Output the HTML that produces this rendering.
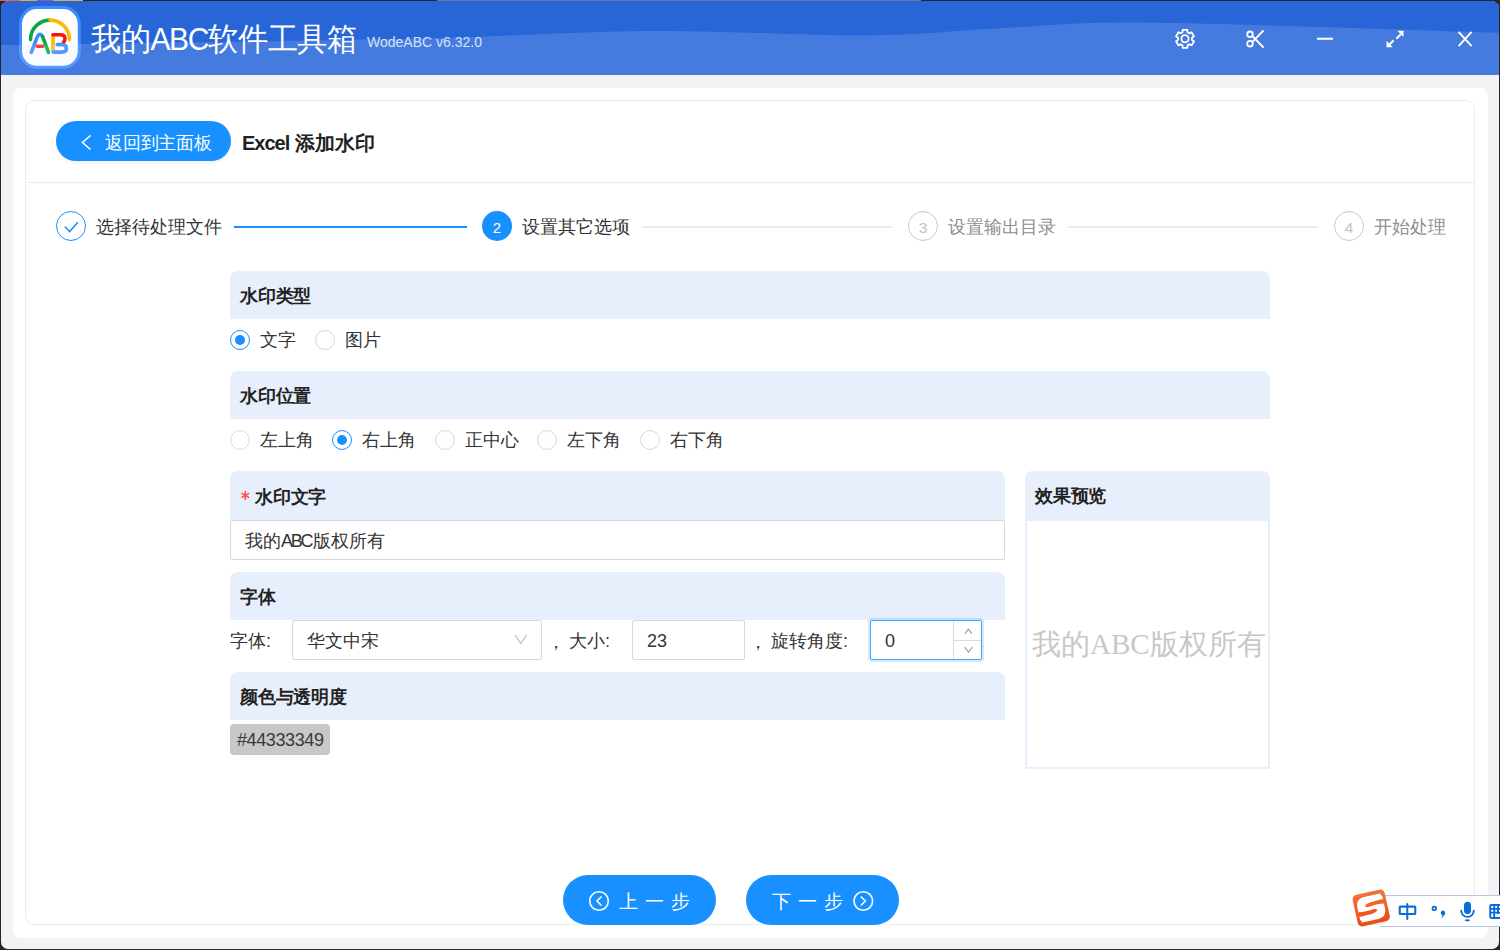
<!DOCTYPE html>
<html><head><meta charset="utf-8">
<style>
*{box-sizing:border-box;margin:0;padding:0}
html,body{width:1500px;height:950px;overflow:hidden;background:#242432;font-family:"Liberation Sans",sans-serif;color:#333}
.abs{position:absolute}
#win{position:absolute;left:1px;top:1px;width:1498px;height:948px;background:#f3f3f3;border-radius:8px 8px 7px 7px;overflow:hidden}
#hdr{position:absolute;left:0;top:0;width:1498px;height:74px;background:#467ddb}
#hdr svg{position:absolute;left:0;top:0}
.t{position:absolute;white-space:nowrap;line-height:1}
#card{position:absolute;left:12px;top:87px;width:1475px;height:850px;background:#fff;border-radius:8px}
#inner{position:absolute;left:24px;top:99px;width:1450px;height:825px;border:1px solid #ececec;border-radius:9px;background:#fff}
.sec{position:absolute;background:#e8effc;border-radius:8px 8px 0 0;height:48px}
.sech{position:absolute;font-size:18px;font-weight:bold;color:#222;white-space:nowrap;line-height:1;margin-top:1px;letter-spacing:-0.2px}
.radio{position:absolute;width:20px;height:20px;border:1px solid #d9d9d9;border-radius:50%;background:#fff}
.radio.on{border-color:#1890ff}
.radio.on:after{content:"";position:absolute;left:4px;top:4px;width:10px;height:10px;border-radius:50%;background:#1890ff}
.lbl{position:absolute;font-size:18px;color:#333;white-space:nowrap;line-height:1}
.inp{position:absolute;border:1px solid #d9d9d9;border-radius:2px;background:#fff}
.btn{position:absolute;background:#1890ff;border-radius:25px;color:#fff}
</style></head><body>
<div class="abs" style="left:437px;top:0;width:484px;height:1px;background:#5b78a6"></div><div class="abs" style="left:0;top:0;width:20px;height:1px;background:#e8643a"></div><div class="abs" style="left:20px;top:0;width:17px;height:1px;background:#e0b040"></div><div class="abs" style="left:37px;top:0;width:16px;height:1px;background:#8a5cb8"></div><div class="abs" style="left:53px;top:0;width:30px;height:1px;background:#d8b048"></div>
<div id="win">
  <div id="hdr">
    <svg width="1498" height="74" viewBox="1 1 1498 74" style="position:absolute;left:0;top:0">
      <rect x="0" y="0" width="1500" height="80" fill="#2866d8"/>
      <rect x="19" y="6" width="61.8" height="62.8" rx="18" fill="#3d8cfc"/>
      <rect x="22" y="9" width="55.8" height="56.8" rx="15" fill="#fff"/>
      <g fill="none" stroke-linecap="round" stroke-width="3.6">
        <path d="M30.5,39.6 A19.5,19.5 0 0 1 50,20.1" stroke="#0aa640"/>
        <path d="M50,20.1 A19.5,19.5 0 0 1 69.5,39.6" stroke="#ffb800"/>
        <path d="M31.3,52.3 L37.2,37 Q40,31.8 42.8,37" stroke="#3d8cfc"/>
        <path d="M42.6,36.6 L48.5,52.3" stroke="#0aa640"/>
        <path d="M37.2,46.3 L42.6,46.3" stroke="#ff2020"/>
        <path d="M53,36 L53,51" stroke="#ffb800"/>
        <path d="M53,34.8 L60.5,34.8 Q65,34.8 65,38.6 Q65,41.2 63.5,42" stroke="#ff1010"/>
        <path d="M57.2,44.6 L62,44.6 Q66.4,44.6 66.4,48.3 Q66.4,52.1 62,52.1 L53.2,52.1" stroke="#3d8cfc"/>
      </g>
      <path fill="rgba(214,232,255,0.17)" d="M0,80 L1500,80 L1500,32.7 C1425.0,30.7 1233.3,23.4 1150.0,22.7 C1066.7,22.0 1047.2,26.2 1000.0,28.3 C952.8,30.4 925.3,35.0 867.0,35.5 C808.7,36.0 727.8,30.4 650.0,31.0 C572.2,31.6 508.3,36.7 400.0,39.0 C291.7,41.3 83.3,43.7 0,45 Z"/>
      <g fill="none" stroke="#fff" stroke-width="1.8" stroke-linecap="round" stroke-linejoin="round">
        <path id="gear" d="M1181.50,32.74 L1182.53,32.25 L1182.61,29.81 L1187.39,29.81 L1187.47,32.25 L1188.50,32.74 L1189.44,33.39 L1191.59,32.24 L1193.98,36.38 L1191.91,37.66 L1192.00,38.80 L1191.91,39.94 L1193.98,41.22 L1191.59,45.36 L1189.44,44.21 L1188.50,44.86 L1187.47,45.35 L1187.39,47.79 L1182.61,47.79 L1182.53,45.35 L1181.50,44.86 L1180.56,44.21 L1178.41,45.36 L1176.02,41.22 L1178.09,39.94 L1178.00,38.80 L1178.09,37.66 L1176.02,36.38 L1178.41,32.24 L1180.56,33.39 Z"/>
        <circle cx="1185" cy="38.8" r="3.6"/>
        <circle cx="1250" cy="34.3" r="2.8"/>
        <circle cx="1250" cy="43.7" r="2.8"/>
        <path d="M1252.4,36.2 L1263,47 M1252.4,41.8 L1263,31"/>
        <path d="M1317,38.8 L1333,38.8" stroke-width="2" stroke-linecap="butt"/>
        <path d="M1396.3,38.7 L1400.6,34.4 M1393.7,40.3 L1389.4,44.6" stroke-width="2.1" stroke-linecap="butt"/><path d="M1397.3,30.8 L1403.5,30.8 L1403.5,37 Z M1386.5,40.8 L1386.5,47.2 L1392.7,47.2 Z" fill="#fff" stroke="none"/>
        <path d="M1458.6,31.8 L1471.6,46.2 M1471.6,31.8 L1458.6,46.2" stroke-width="1.9" stroke-linecap="butt"/>
      </g>
    </svg>
    <div class="t" style="left:90px;top:23px;font-size:30px;color:#fff;letter-spacing:-0.3px;transform:scaleY(1.06);transform-origin:0 0">我的<span style="letter-spacing:-1.3px">ABC</span>软件工具箱</div>
    <div class="t" style="left:366px;top:34px;font-size:14px;color:#d5e2f8">WodeABC v6.32.0</div>
  </div>
  <div id="card"></div>
  <div id="inner"></div>
</div>

<div id="pg" style="position:absolute;left:0;top:0;width:1500px;height:950px">
  <!-- back button -->
  <div class="btn" style="left:56px;top:121px;width:175px;height:40px;border-radius:20px;box-shadow:0 2px 3px rgba(0,0,0,0.06)"></div>
  <svg class="abs" style="left:0;top:0" width="1500" height="950">
    <path d="M90.5,135.5 L82.5,142.5 L90.5,149.5" fill="none" stroke="#fff" stroke-width="1.6"/>
  </svg>
  <div class="t" style="left:105px;top:134px;font-size:18px;color:#fff;letter-spacing:-0.2px">返回到主面板</div>
  <div class="t" style="left:242px;top:133px;font-size:20px;font-weight:bold;color:#222"><span style="letter-spacing:-1px">Excel</span> 添加水印</div>
  <div class="abs" style="left:25px;top:182px;width:1449px;height:1px;background:#ececec"></div>

  <!-- steps -->
  <div class="abs" style="left:56px;top:211px;width:30px;height:30px;border:1px solid #1890ff;border-radius:50%"></div>
  <svg class="abs" style="left:0;top:0" width="1500" height="950">
    <path d="M64.8,226.6 L69.6,231.6 L77.9,222.2" fill="none" stroke="#1890ff" stroke-width="1.5"/>
  </svg>
  <div class="t" style="left:96px;top:218px;font-size:18px;color:#333">选择待处理文件</div>
  <div class="abs" style="left:234px;top:226px;width:233px;height:2px;background:#1890ff"></div>

  <div class="abs" style="left:482px;top:211px;width:30px;height:30px;background:#1890ff;border-radius:50%"></div>
  <div class="t" style="left:482px;top:220px;width:30px;text-align:center;font-size:15px;color:#fff">2</div>
  <div class="t" style="left:522px;top:218px;font-size:18px;color:#333">设置其它选项</div>
  <div class="abs" style="left:642px;top:226px;width:250px;height:2px;background:#ececec"></div>

  <div class="abs" style="left:908px;top:211px;width:30px;height:30px;border:1px solid #c8c8c8;border-radius:50%"></div>
  <div class="t" style="left:908px;top:220px;width:30px;text-align:center;font-size:15.5px;color:#c2c2c2">3</div>
  <div class="t" style="left:948px;top:218px;font-size:18px;color:#8e8e8e">设置输出目录</div>
  <div class="abs" style="left:1068px;top:226px;width:250px;height:2px;background:#ececec"></div>

  <div class="abs" style="left:1334px;top:211px;width:30px;height:30px;border:1px solid #c8c8c8;border-radius:50%"></div>
  <div class="t" style="left:1334px;top:220px;width:30px;text-align:center;font-size:15.5px;color:#c2c2c2">4</div>
  <div class="t" style="left:1374px;top:218px;font-size:18px;color:#8e8e8e">开始处理</div>

  <!-- section 1 -->
  <div class="sec" style="left:230px;top:271px;width:1040px"></div>
  <div class="sech" style="left:240px;top:286px">水印类型</div>
  <div class="radio on" style="left:230px;top:330px"></div>
  <div class="lbl" style="left:260px;top:331px">文字</div>
  <div class="radio" style="left:315px;top:330px"></div>
  <div class="lbl" style="left:345px;top:331px">图片</div>

  <!-- section 2 -->
  <div class="sec" style="left:230px;top:371px;width:1040px"></div>
  <div class="sech" style="left:240px;top:386px">水印位置</div>
  <div class="radio" style="left:230px;top:430px"></div>
  <div class="lbl" style="left:260px;top:431px">左上角</div>
  <div class="radio on" style="left:332px;top:430px"></div>
  <div class="lbl" style="left:362px;top:431px">右上角</div>
  <div class="radio" style="left:435px;top:430px"></div>
  <div class="lbl" style="left:465px;top:431px">正中心</div>
  <div class="radio" style="left:537px;top:430px"></div>
  <div class="lbl" style="left:567px;top:431px">左下角</div>
  <div class="radio" style="left:640px;top:430px"></div>
  <div class="lbl" style="left:670px;top:431px">右下角</div>

  <!-- section 3 -->
  <div class="sec" style="left:230px;top:471px;width:775px;height:49px"></div>
  <svg class="abs" style="left:0;top:0" width="1500" height="950"><path d="M245.3,490.9 V499.9 M241.4,493.15 L249.2,497.65 M241.4,497.65 L249.2,493.15" stroke="#ff4d4f" stroke-width="1.6" fill="none"/></svg>
  <div class="sech" style="left:255px;top:487px">水印文字</div>
  <div class="inp" style="left:230px;top:520px;width:775px;height:40px"></div>
  <div class="lbl" style="left:245px;top:532px;color:#333">我的<span style="letter-spacing:-2.2px">ABC</span><span style="margin-left:2px">版权所有</span></div>

  <!-- section 4 -->
  <div class="sec" style="left:230px;top:572px;width:775px"></div>
  <div class="sech" style="left:240px;top:587px">字体</div>
  <div class="lbl" style="left:230px;top:632px">字体:</div>
  <div class="inp" style="left:292px;top:620px;width:250px;height:40px"></div>
  <div class="lbl" style="left:307px;top:632px">华文中宋</div>
  <svg class="abs" style="left:0;top:0" width="1500" height="950">
    <path d="M515,635 L520.8,643.5 L526.6,635" fill="none" stroke="#bbb" stroke-width="1.2"/>
  </svg>
  <div class="lbl" style="left:547px;top:633px">，</div><div class="lbl" style="left:569px;top:632px">大小:</div>
  <div class="inp" style="left:632px;top:620px;width:113px;height:40px"></div>
  <div class="lbl" style="left:647px;top:632px">23</div>
  <div class="lbl" style="left:749px;top:633px">，</div><div class="lbl" style="left:771px;top:632px">旋转角度:</div>
  <div class="inp" style="left:870px;top:620px;width:112px;height:40px;border-color:#40a9ff;box-shadow:0 0 0 2px rgba(24,144,255,0.2)"></div>
  <div class="abs" style="left:953px;top:621px;width:1px;height:38px;background:#d9d9d9"></div>
  <div class="abs" style="left:954px;top:640px;width:27px;height:1px;background:#d9d9d9"></div>
  <svg class="abs" style="left:0;top:0" width="1500" height="950">
    <path d="M965,633.6 L968.4,629.2 L971.8,633.6 M964.6,647 L968.5,652.2 L972.4,647" fill="none" stroke="#999" stroke-width="1.1"/>
  </svg>
  <div class="lbl" style="left:885px;top:632px">0</div>

  <!-- section 5 -->
  <div class="sec" style="left:230px;top:672px;width:775px"></div>
  <div class="sech" style="left:240px;top:687px">颜色与透明度</div>
  <div class="abs" style="left:230px;top:724px;width:100px;height:31px;background:#c9c7c7;border-radius:4px"></div>
  <div class="t" style="left:237px;top:731px;font-size:18px;color:#383a3c;letter-spacing:-0.4px">#44333349</div>

  <!-- preview -->
  <div class="abs" style="left:1025px;top:471px;width:245px;height:298px;border:2px solid #e8effc;border-radius:8px 8px 0 0"></div>
  <div class="sec" style="left:1025px;top:471px;width:245px;height:50px"></div>
  <div class="sech" style="left:1035px;top:486px">效果预览</div>
  <div class="t" style="left:1032px;top:630px;font-size:29px;color:#c8c8c8;font-family:'Liberation Serif',serif">我的ABC版权所有</div>

  <!-- bottom buttons -->
  <div class="btn" style="left:563px;top:875px;width:153px;height:50px"></div>
  <div class="btn" style="left:746px;top:875px;width:153px;height:50px"></div>
  <svg class="abs" style="left:0;top:0" width="1500" height="950">
    <g fill="none" stroke="#fff" stroke-width="1.6">
      <circle cx="599" cy="901" r="9.3"/>
      <path d="M601.5,896.5 L597,901 L601.5,905.5"/>
      <circle cx="863.3" cy="901" r="9.3"/>
      <path d="M860.8,896.5 L865.3,901 L860.8,905.5"/>
    </g>
  </svg>
  <div class="t" style="left:619px;top:892px;font-size:19px;color:#fff;letter-spacing:7px">上一步</div>
  <div class="t" style="left:772px;top:892px;font-size:19px;color:#fff;letter-spacing:7px">下一步</div>

  <!-- IME toolbar -->
  <div class="abs" style="left:1380px;top:895px;width:120px;height:32px;background:#fff;border-top:1px solid #b3cae6;border-bottom:1px solid #b3cae6"></div>
  <svg class="abs" style="left:0;top:0" width="1500" height="950">
    <defs><linearGradient id="og" x1="0" y1="0" x2="0" y2="1"><stop offset="0" stop-color="#f47339"/><stop offset="1" stop-color="#e94d14"/></linearGradient></defs>
    <g transform="translate(1371.2,908) rotate(-12.5)">
      <rect x="-16.4" y="-16.2" width="32.8" height="32.4" rx="4.6" fill="url(#og)"/>
      <path fill="#fff" d="M-4.6,-12.3 L11.8,-12.3 L13.4,-8.8 L13.4,3.3 C13.4,9 10,12.3 4.6,12.3 L-11.8,12.3 L-13.4,8.8 L-13.4,-3.3 C-13.4,-9 -10,-12.3 -4.6,-12.3 Z"/>
      <path fill="#f26326" d="M14,-6.2 C6,-6.4 -2,-6.2 -4.8,-4.2 C-6.4,-2.9 -4.8,-1.6 -2.5,-1.7 C3,-2 8.5,-2.6 14,-1.4 Z"/>
      <path fill="#ee5820" d="M-14,6.2 C-6,6.4 2,6.2 4.8,4.2 C6.4,2.9 4.8,1.6 2.5,1.7 C-3,2 -8.5,2.6 -14,1.4 Z"/>
    </g>
    <g fill="#0b6bd8" stroke="none">
      <path d="M1400.3,905.6 h14.4 a1.6,1.6 0 0 1 1.6,1.6 v6.2 a1.6,1.6 0 0 1 -1.6,1.6 h-14.4 a1.6,1.6 0 0 1 -1.6,-1.6 v-6.2 a1.6,1.6 0 0 1 1.6,-1.6 z M1400.8,907.7 v5.2 h13.4 v-5.2 z"/>
      <rect x="1406.3" y="903" width="2" height="17" rx="1"/>
      <circle cx="1434.3" cy="908.4" r="2.7"/>
      <path d="M1442.6,910.4 a2.6,2.6 0 0 1 2.2,4 l-3.6,4.4 l1.2,-3.5 a2.6,2.6 0 0 1 0.2,-4.9 z"/>
      <rect x="1464" y="901.7" width="7" height="12.2" rx="3.5"/>
      <ellipse cx="1467.4" cy="920.3" rx="2.6" ry="1.1"/>
    </g>
    <circle cx="1434.3" cy="908.4" r="0.9" fill="#fff"/>
    <path d="M1461.2,910.6 A6.2,6.2 0 0 0 1473.8,910.6" fill="none" stroke="#0b6bd8" stroke-width="1.9" stroke-linecap="round"/>
    <g fill="none" stroke="#0b6bd8" stroke-width="1.9">
      <rect x="1490.2" y="905" width="14" height="13" rx="1.2"/>
      <path d="M1490.5,908.9 h12 M1490.5,912.6 h12 M1494.2,905 v13 M1498,905 v9"/>
    </g>
  </svg>
</div>
</body></html>
